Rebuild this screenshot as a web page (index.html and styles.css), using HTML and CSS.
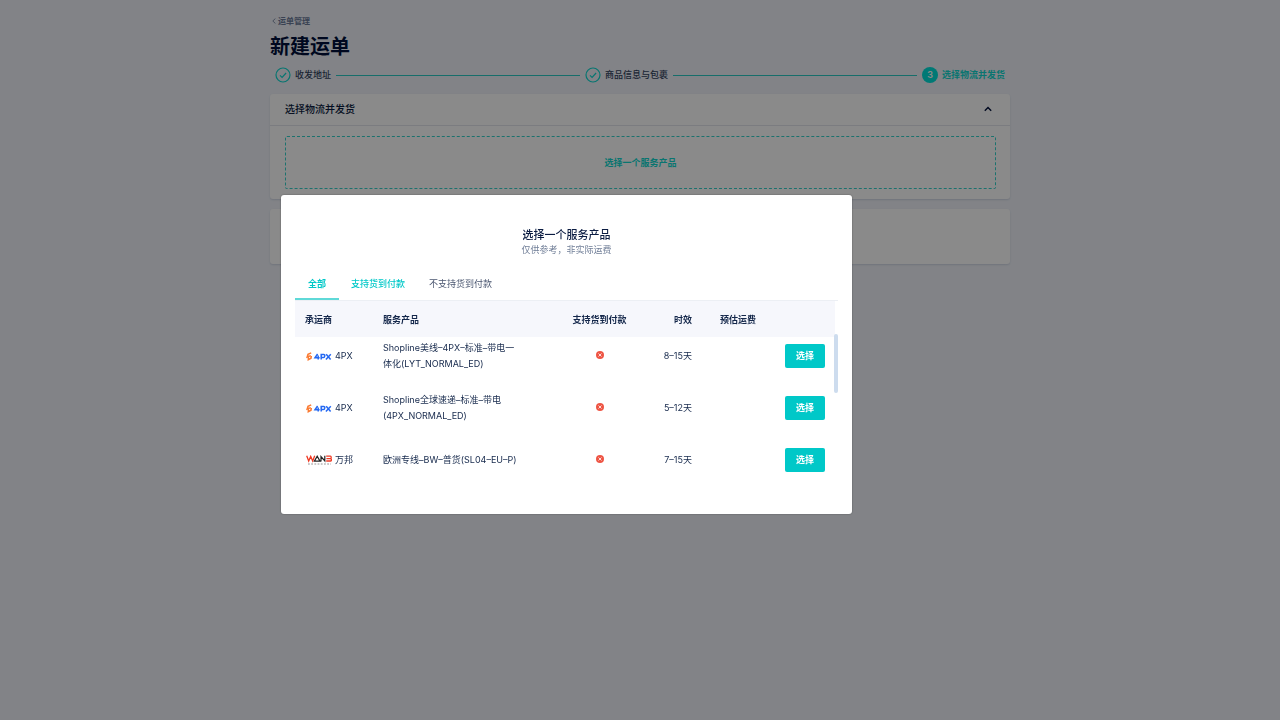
FILE: index.html
```html
<!DOCTYPE html>
<html lang="zh-CN">
<head>
<meta charset="utf-8">
<title>新建运单</title>
<link rel="stylesheet" href="styles.css">
</head>
<body>
<svg class="sprite" aria-hidden="true">
  <symbol id="check" viewBox="0 0 16 16"><circle cx="8" cy="8" r="7" fill="none" stroke="currentColor" stroke-width="1.2"/><path d="M5 8.3l2.1 2.1 4-4.4" fill="none" stroke="currentColor" stroke-width="1.2"/></symbol>
  <symbol id="cross" viewBox="0 0 8 8"><circle cx="4" cy="4" r="4" fill="#ee5544"/><path d="M2.5 2.5l3 3M5.5 2.5l-3 3" stroke="#fff" stroke-width=".8"/></symbol>
  <symbol id="px" viewBox="0 0 26 9">
    <path d="M5.2 .9L2 2.4 1.2 5l3.6-1.4M2.4 5l-.1 2.7 2.7-1.5.3-2.4" fill="none" stroke="#fb7a31" stroke-width="1.5"/>
    <path d="M11.6 2L9 5.7h4.6M12.2 3.6v4M15.2 7.6V2.6h2.5q1.3 0 1.1 1.4-.2 1.6-1.5 1.6h-1.9M20.2 2.2l4.4 5.2M24.8 2.2l-4.9 5.2" fill="none" stroke="#2468f2" stroke-width="1.5"/>
  </symbol>
  <symbol id="wanb" viewBox="0 0 26 10">
    <path d="M.7.8l2 5.2 2-4.6 2 4.6 2-5.2" fill="none" stroke="#ee3a24" stroke-width="1.3"/>
    <path d="M8.4 6.1l2.8-4.8 2.8 4.8zM15 6.6V1.6l3.8 4.4V.8" fill="none" stroke="#222" stroke-width="1.2"/>
    <path d="M20.2 1.2h4.2q.8 0 .8 1.2t-.8 1.2h-4 4q1 0 1 1.2t-1 1.2h-4.2" fill="none" stroke="#ee3a24" stroke-width="1.3"/>
    <path d="M2 9h23" stroke="#888" stroke-width=".9" stroke-dasharray="1.8 1.4"/>
  </symbol>
</svg>
<main class="page">
  <a class="back" href="#"><svg class="back-icon" viewBox="0 0 4 6"><path d="M3.4.5L.8 3l2.6 2.5" fill="none" stroke="currentColor" stroke-width=".8"/></svg>运单管理</a>
  <h1 class="page-title">新建运单</h1>
  <ol class="steps">
    <li class="step"><svg class="step-icon"><use href="#check"/></svg>收发地址</li>
    <li class="step-line" aria-hidden="true"></li>
    <li class="step"><svg class="step-icon"><use href="#check"/></svg>商品信息与包裹</li>
    <li class="step-line" aria-hidden="true"></li>
    <li class="step step-current"><span class="step-number">3</span>选择物流并发货</li>
  </ol>
  <section class="card">
    <header class="card-head">
      <h2 class="card-title">选择物流并发货</h2>
      <button class="collapse" type="button" aria-label="收起"><svg class="collapse-icon" viewBox="0 0 8 6"><path d="M.8 4.8L4 1.5l3.2 3.3" fill="none" stroke="currentColor" stroke-width="1.4"/></svg></button>
    </header>
    <div class="card-body"><button class="picker" type="button">选择一个服务产品</button></div>
  </section>
  <section class="card card-empty"></section>
</main>
<div class="overlay">
  <div class="modal" role="dialog" aria-modal="true" aria-labelledby="modal-title">
    <h2 class="modal-title" id="modal-title">选择一个服务产品</h2>
    <p class="modal-note">仅供参考，非实际运费</p>
    <div class="tabs" role="tablist">
      <button class="tab tab-active" type="button" role="tab" aria-selected="true">全部</button>
      <button class="tab tab-hover" type="button" role="tab">支持货到付款</button>
      <button class="tab" type="button" role="tab">不支持货到付款</button>
    </div>
    <div class="list">
      <table class="products">
        <colgroup><col class="col-carrier"><col class="col-product"><col class="col-cod"><col class="col-time"><col class="col-fee"><col class="col-action"></colgroup>
        <thead>
          <tr><th>承运商</th><th>服务产品</th><th class="center">支持货到付款</th><th class="right">时效</th><th class="right">预估运费</th><th></th></tr>
        </thead>
        <tbody>
          <tr>
            <td><span class="carrier"><svg class="logo logo-px"><use href="#px"/></svg>4PX</span></td>
            <td class="product">Shopline美线–4PX–标准–带电一体化(LYT_NORMAL_ED)</td>
            <td class="center"><svg class="cross"><use href="#cross"/></svg></td>
            <td class="right">8–15天</td><td></td>
            <td class="right"><button class="choose" type="button">选择</button></td>
          </tr>
          <tr>
            <td><span class="carrier"><svg class="logo logo-px"><use href="#px"/></svg>4PX</span></td>
            <td class="product">Shopline全球速递–标准–带电(4PX_NORMAL_ED)</td>
            <td class="center"><svg class="cross"><use href="#cross"/></svg></td>
            <td class="right">5–12天</td><td></td>
            <td class="right"><button class="choose" type="button">选择</button></td>
          </tr>
          <tr>
            <td><span class="carrier"><svg class="logo logo-wanb"><use href="#wanb"/></svg>万邦</span></td>
            <td class="product">欧洲专线–BW–普货(SL04–EU–P)</td>
            <td class="center"><svg class="cross"><use href="#cross"/></svg></td>
            <td class="right">7–15天</td><td></td>
            <td class="right"><button class="choose" type="button">选择</button></td>
          </tr>
        </tbody>
      </table>
      <span class="scroll-thumb"></span>
    </div>
  </div>
</div>
</body>
</html>
```
FILE: styles.css
```css
* { box-sizing: border-box; }
body {
  margin: 0;
  min-height: 100vh;
  background: #f0f3fa;
  color: #15284b;
  font: 9px/16px Inter, "Noto Sans CJK SC", sans-serif;
}
button {
  padding: 0;
  border: 0;
  background: none;
  color: inherit;
  font: inherit;
  cursor: pointer;
}
h1, h2, p, ol { margin: 0; padding: 0; }
svg { display: block; }
.sprite { position: absolute; width: 0; height: 0; }

.page { max-width: 740px; margin: 0 auto; padding-top: 13px; }
.back {
  display: flex;
  align-items: center;
  gap: 2px;
  padding-left: 2px;
  color: #6b7a99;
  font-size: 8px;
  font-weight: 600;
  text-decoration: none;
}
.back-icon { width: 4px; height: 6px; }
.page-title { padding-top: 6px; color: #00103a; font-size: 20px; line-height: 24px; font-weight: 700; }
.steps {
  display: flex;
  align-items: center;
  gap: 5px;
  height: 16px;
  margin: 8px 5px 11px;
  list-style: none;
}
.step { display: flex; align-items: center; gap: 4px; color: #34435f; font-weight: 500; }
.step-icon { width: 16px; height: 16px; color: #0ed8d0; }
.step-line { flex: 1; height: 1px; background: #2cccc6; }
.step-current { color: #12d8d0; font-weight: 600; }
.step-number {
  width: 16px;
  border-radius: 50%;
  background: #00e0d8;
  color: #fff;
  text-align: center;
}
.card {
  margin-bottom: 10px;
  border-radius: 3px;
  background: #fff;
  box-shadow: 0 1px 2px rgba(30, 50, 100, .15);
}
.card-head {
  display: flex;
  align-items: center;
  justify-content: space-between;
  height: 32px;
  padding: 0 18px 1px 15px;
  border-bottom: 1px solid #e3e6ec;
}
.card-title { color: #0b1c42; font-size: 10px; font-weight: 500; }
.collapse { color: #00103a; }
.collapse-icon { width: 8px; height: 6px; }
.card-body { padding: 10px 14px 10px 15px; }
.picker {
  width: 100%;
  height: 53px;
  border: 1px dashed #34d2cc;
  border-radius: 2px;
  color: #12d8d0;
  font-weight: 600;
}
.card-empty { height: 55px; }

.overlay {
  position: fixed;
  inset: 0;
  padding: 195px 24px 0 281px;
  background: rgba(0, 0, 0, .46);
}
.modal {
  max-width: 571px;
  padding: 31px 14px 21px;
  border-radius: 3px;
  background: #fff;
  box-shadow: 0 0 2px rgba(0, 0, 0, .4);
}
.modal-title { color: #0b1c42; font-size: 11px; line-height: 18px; font-weight: 500; text-align: center; }
.modal-note { color: #717f98; line-height: 12px; text-align: center; }
.tabs { display: flex; margin-top: 12px; border-bottom: 1px solid #eceff4; }
.tab { height: 32px; padding: 0 12px; color: #4a5670; }
.tab-active {
  min-width: 44px;
  box-shadow: inset 0 -2px #5fd9d8;
  color: #00c8c8;
  font-weight: 700;
}
.tab-hover { color: #00c8c8; font-weight: 500; }
.list { position: relative; }
.products {
  width: calc(100% - 3px);
  table-layout: fixed;
  border-collapse: collapse;
}
.col-carrier { width: 78px; }
.col-product { width: 170px; }
.col-cod { width: 113px; }
.col-time { width: 46px; }
.col-fee { width: 64px; }
.products th {
  height: 36px;
  padding: 1px 10px 0;
  background: #f6f7fc;
  font-weight: 600;
  text-align: left;
  white-space: nowrap;
}
.products td { height: 52px; padding: 0 10px 14px; white-space: nowrap; }
.products .product { padding-right: 24px; white-space: normal; }
.products .center { text-align: center; }
.products .right { padding-left: 0; text-align: right; }
.carrier { display: flex; align-items: center; gap: 3px; }
.logo { width: 26px; margin-left: 1px; }
.logo-px { height: 9px; }
.logo-wanb { height: 10px; }
.cross { width: 8px; height: 8px; margin: 0 auto 3px; }
.choose {
  width: 40px;
  height: 24px;
  border-radius: 2px;
  background: #00c8c8;
  color: #fff;
  font-weight: 700;
}
.scroll-thumb {
  position: absolute;
  top: 33px;
  right: 0;
  width: 4px;
  height: 59px;
  border-radius: 2px;
  background: #cddcee;
}
```
